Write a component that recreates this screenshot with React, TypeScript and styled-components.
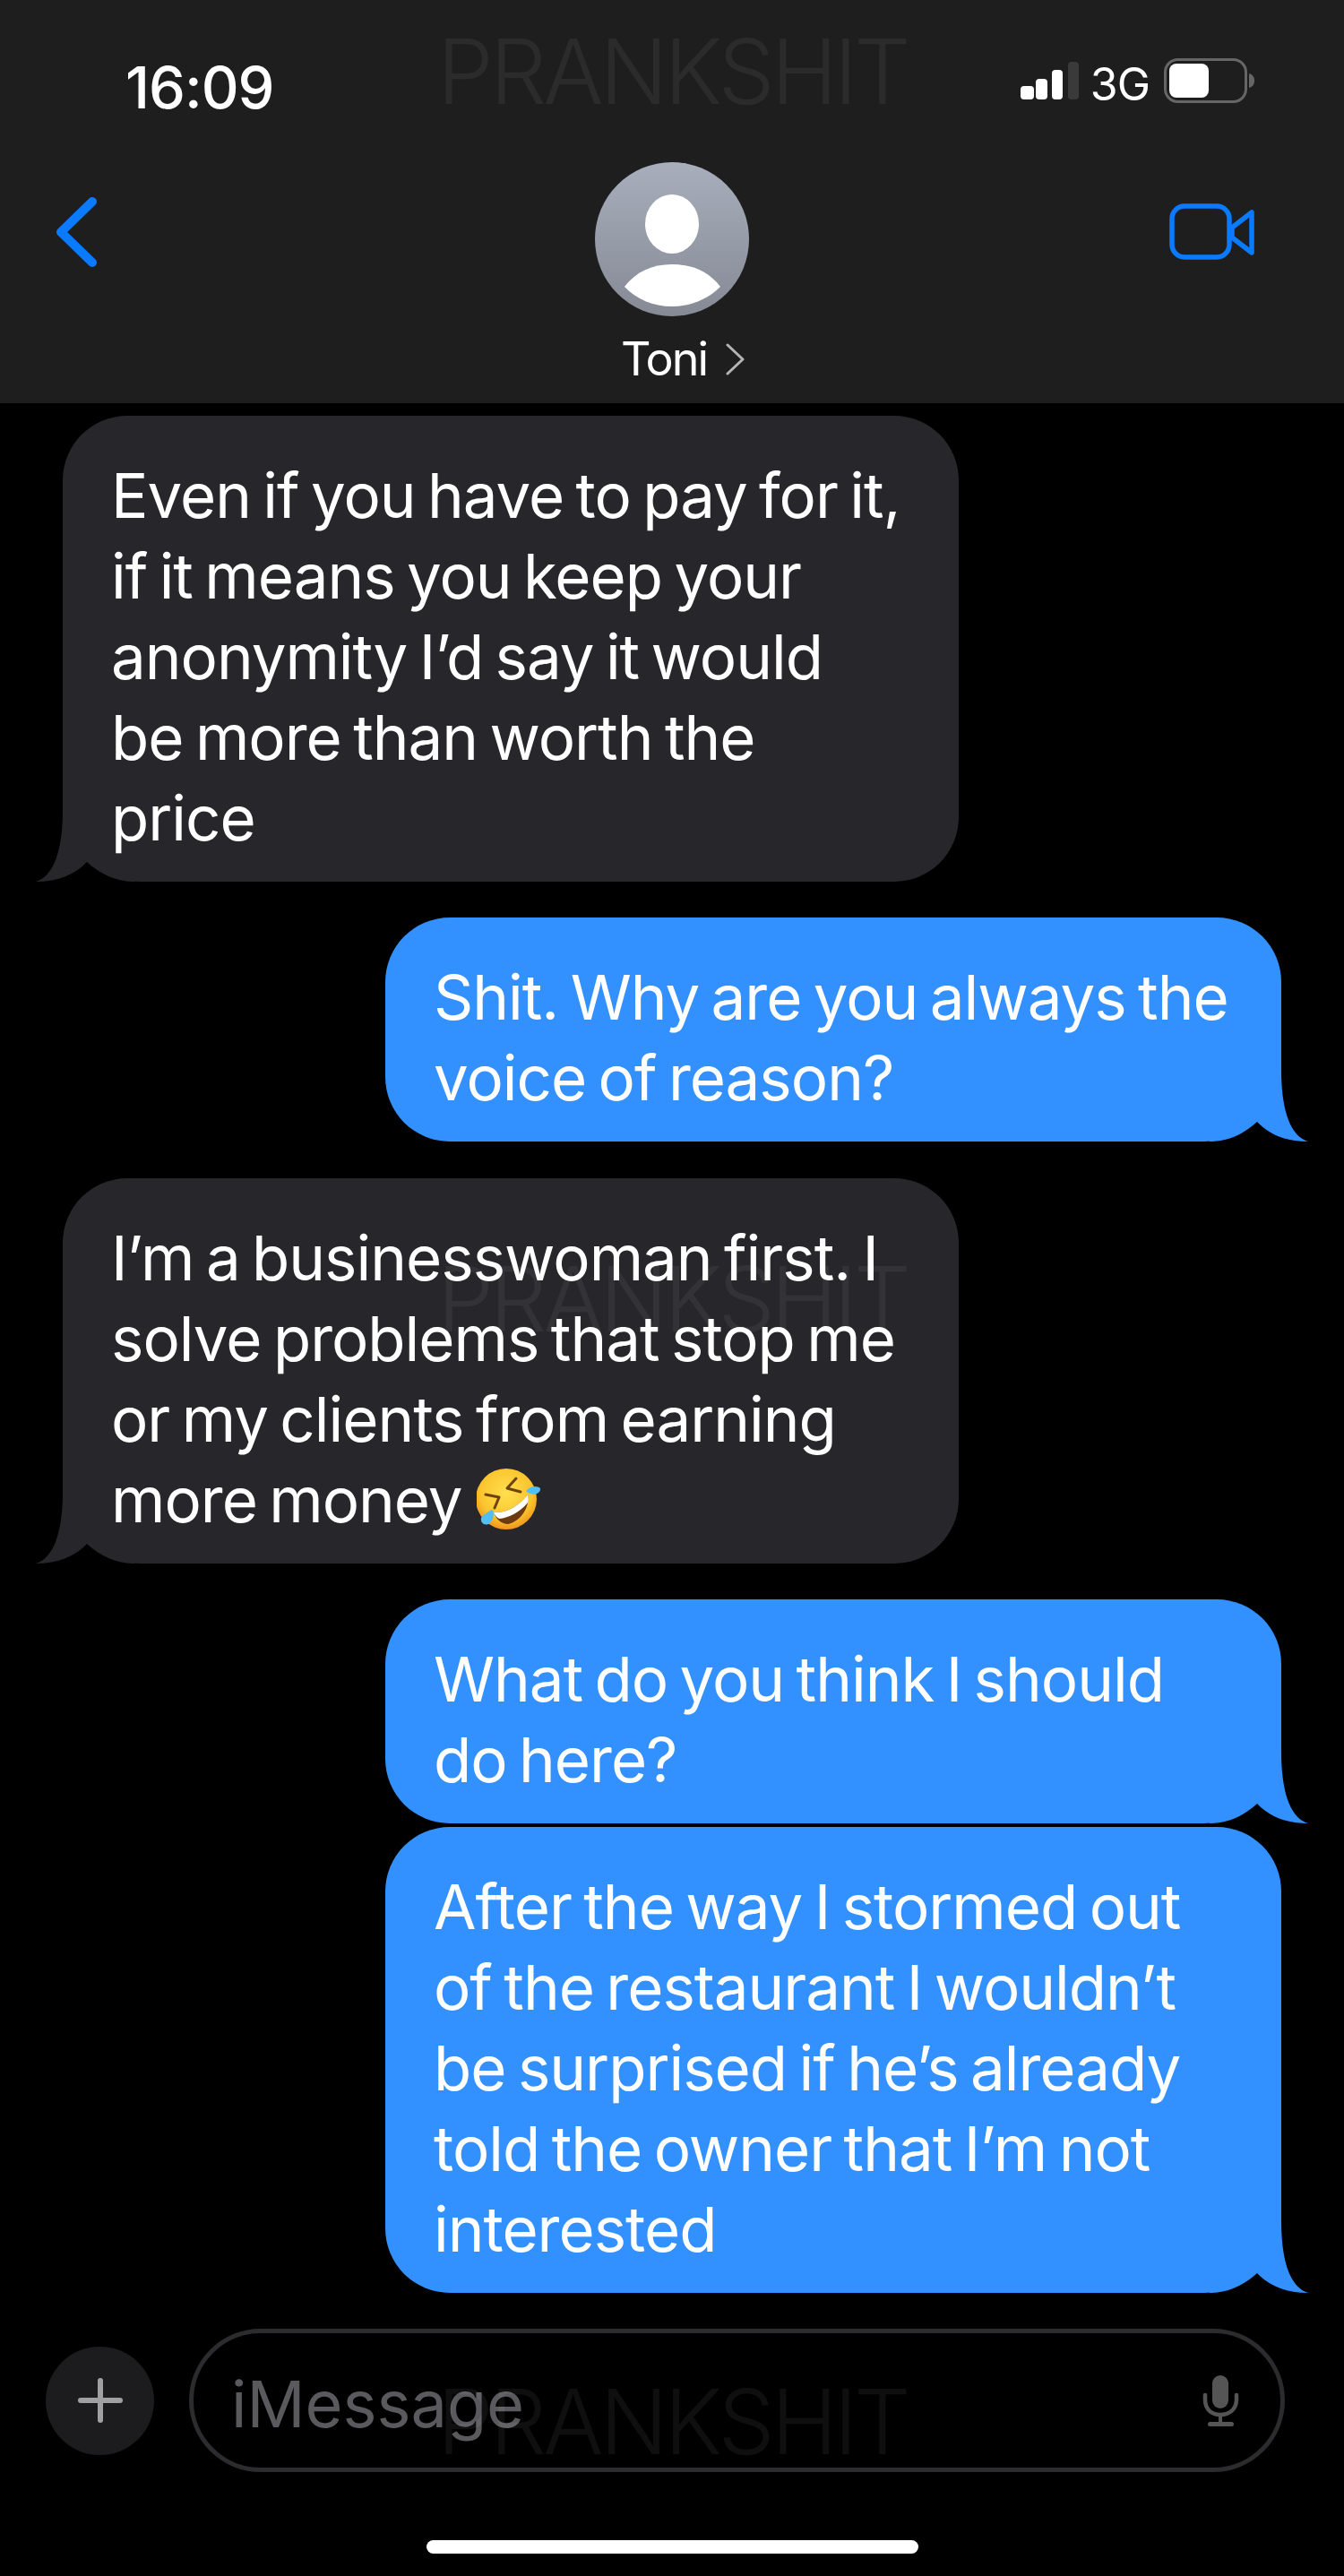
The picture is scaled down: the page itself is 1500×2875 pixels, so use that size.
import React from "react";
import styled, { createGlobalStyle } from "styled-components";

const Global = createGlobalStyle`
  html, body { margin: 0; padding: 0; background: #000; }
  * { box-sizing: border-box; }
`;

const Screen = styled.div`
  position: relative;
  width: 1500px;
  height: 2875px;
  background: #000;
  overflow: hidden;
  display: flex;
  flex-direction: column;
  font-family: Inter, "Liberation Sans", sans-serif;
  color: #fff;
`;

const Header = styled.header`
  height: 450px;
  background: #1e1e1e;
  display: flex;
  flex-direction: column;
  flex-shrink: 0;
`;

const StatusBar = styled.div`
  display: flex;
  justify-content: space-between;
  align-items: flex-start;
  padding: 56px 100px 0 140px;
  height: 181px;
`;

const Clock = styled.div`
  font-size: 65px;
  line-height: 80px;
  font-weight: 500;
  letter-spacing: -1px;
  margin-top: 2px;
`;

const StatusIcons = styled.div`
  display: flex;
  align-items: center;
`;

const SignalIcon = styled.svg`
  width: 66px;
  height: 44px;
  display: block;
`;

const BatteryIcon = styled.svg`
  width: 101px;
  height: 50px;
  display: block;
`;

const NetworkLabel = styled.span`
  font-size: 50px;
  line-height: 60px;
  font-weight: 400;
  letter-spacing: -1px;
  padding-top: 8px;
  margin: 0 16px 0 12px;
`;

const NavBar = styled.div`
  display: grid;
  grid-template-columns: 1fr 300px 1fr;
  align-items: start;
`;

const BackIcon = styled.svg`
  width: 50px;
  height: 80px;
  margin: 38px 0 0 58px;
  display: block;
`;

const Contact = styled.div`
  display: flex;
  flex-direction: column;
  align-items: center;
`;

const Avatar = styled.svg`
  width: 172px;
  height: 172px;
  display: block;
`;

const ContactName = styled.div`
  display: flex;
  align-items: center;
  margin-top: 16px;
  margin-left: 26px;
  font-size: 52px;
  line-height: 64px;
  letter-spacing: -2px;
`;

const Disclosure = styled.svg`
  width: 24px;
  height: 36px;
  margin-left: 20px;
  display: block;
`;

const VideoIcon = styled.svg`
  width: 96px;
  height: 66px;
  margin: 45px 100px 0 0;
  justify-self: end;
  display: block;
`;

const Thread = styled.main`
  display: flex;
  flex-direction: column;
  padding: 14px 70px 0;
  flex: 1;
`;

const Bubble = styled.div<{ $sent?: boolean; $gap: number }>`
  position: relative;
  width: 1000px;
  margin-top: ${(p) => p.$gap}px;
  align-self: ${(p) => (p.$sent ? "flex-end" : "flex-start")};
  padding: 44px 30px 26px 54px;
  border-radius: 72px;
  ${(p) =>
    p.$sent ? "border-bottom-right-radius: 86px;" : "border-bottom-left-radius: 86px;"}
  background: ${(p) => (p.$sent ? "#3390ff" : "#26262b")};
  font-size: 69px;
  line-height: 90px;
  letter-spacing: -1px;
  word-spacing: -5px;
`;

const Line = styled.span`
  position: relative;
  display: block;
  white-space: nowrap;
`;

const Tail = styled.svg<{ $sent?: boolean }>`
  position: absolute;
  bottom: 0;
  width: 110px;
  height: 90px;
  display: block;
  fill: ${(p) => (p.$sent ? "#3390ff" : "#26262b")};
  ${(p) => (p.$sent ? "right: -30px;" : "left: -30px; transform: scaleX(-1);")}
`;

const Emoji = styled.svg`
  display: inline-block;
  width: 74px;
  height: 74px;
  margin-left: 16px;
  vertical-align: -11px;
`;

const Composer = styled.div`
  display: flex;
  align-items: center;
  height: 160px;
  margin-top: 39px;
  padding: 0 66px 0 51px;
  gap: 39px;
  flex-shrink: 0;
`;

const PlusButton = styled.div`
  width: 121px;
  height: 121px;
  border-radius: 50%;
  background: #1c1c1e;
  display: flex;
  align-items: center;
  justify-content: center;
  flex-shrink: 0;
`;

const PlusIcon = styled.svg`
  width: 50px;
  height: 50px;
  display: block;
`;

const InputPill = styled.div`
  flex: 1;
  height: 160px;
  border: 5px solid #2c2c2e;
  border-radius: 80px;
  display: flex;
  align-items: center;
  justify-content: space-between;
  padding: 0 44px 0 42px;
`;

const Placeholder = styled.span`
  font-size: 72px;
  margin-top: 6px;
  color: #5a5a5e;
`;

const MicIcon = styled.svg`
  width: 44px;
  height: 62px;
  margin-top: 2px;
  display: block;
`;

const HomeRow = styled.div`
  display: flex;
  justify-content: center;
  height: 116px;
  padding-top: 76px;
  flex-shrink: 0;
`;

const HomeBar = styled.div`
  width: 549px;
  height: 15px;
  border-radius: 8px;
  background: #fff;
`;

const Watermark = styled.div<{ $top: number }>`
  position: absolute;
  left: 488px;
  top: ${(p) => p.$top}px;
  font-size: 100px;
  line-height: 100px;
  font-weight: 300;
  letter-spacing: -4px;
  color: rgba(255, 255, 255, 0.06);
  pointer-events: none;
`;

const messages: { sent?: boolean; gap: number; lines: string[]; emoji?: boolean }[] = [
  {
    gap: 0,
    lines: [
      "Even if you have to pay for it,",
      "if it means you keep your",
      "anonymity I’d say it would",
      "be more than worth the",
      "price",
    ],
  },
  { sent: true, gap: 40, lines: ["Shit. Why are you always the", "voice of reason?"] },
  {
    gap: 41,
    lines: [
      "I’m a businesswoman first. I",
      "solve problems that stop me",
      "or my clients from earning",
      "more money",
    ],
    emoji: true,
  },
  { sent: true, gap: 40, lines: ["What do you think I should", "do here?"] },
  {
    sent: true,
    gap: 4,
    lines: [
      "After the way I stormed out",
      "of the restaurant I wouldn’t",
      "be surprised if he’s already",
      "told the owner that I’m not",
      "interested",
    ],
  },
];

const RoflEmoji = () => (
  <Emoji viewBox="0 0 74 74">
    <defs>
      <radialGradient id="face" cx="50%" cy="40%" r="60%">
        <stop offset="0%" stopColor="#ffdf4f" />
        <stop offset="70%" stopColor="#fbc52e" />
        <stop offset="100%" stopColor="#f0951d" />
      </radialGradient>
    </defs>
    <circle cx="33" cy="37" r="34" fill="url(#face)" />
    <path d="M19 52 C33 53 47 45 57 32 C60 44 50 62 35 65 C28 65 22 60 19 52 Z" fill="#6b3a10" />
    <path d="M19 52 C33 53 47 45 57 32 C58 36 58 39 57 41 C48 52 36 58 25 59 C22 57 20 55 19 52 Z" fill="#fff" />
    <path d="M10 32 L25 35 L20 47" fill="none" stroke="#6e4310" strokeWidth="3" strokeLinecap="round" strokeLinejoin="round" />
    <path d="M44 14 L34 25 L49 29" fill="none" stroke="#6e4310" strokeWidth="3" strokeLinecap="round" strokeLinejoin="round" />
    <path d="M55 28 C60 22 68 22 71 25 C72 31 62 35 55 28 Z" fill="#54bdf2" />
    <path d="M18 49 C20 55 18 62 13 65 C8 67 4 63 5 58 C7 55 12 51 18 49 Z" fill="#54bdf2" />
  </Emoji>
);

export default function App() {
  return (
    <Screen>
      <Global />
      <Header>
        <StatusBar>
          <Clock>16:09</Clock>
          <StatusIcons>
            <SignalIcon viewBox="0 0 66 44">
              <rect x="0" y="28" width="15" height="15" rx="4" fill="#fff" />
              <rect x="17" y="20" width="13" height="23" rx="4" fill="#fff" />
              <rect x="35" y="10" width="12" height="33" rx="4" fill="#fff" />
              <rect x="53" y="1" width="12" height="42" rx="4" fill="#3a3a3a" />
            </SignalIcon>
            <NetworkLabel>3G</NetworkLabel>
            <BatteryIcon viewBox="0 0 101 50">
              <rect x="1.5" y="1.5" width="90" height="47" rx="14" fill="none" stroke="#666" strokeWidth="3" />
              <rect x="6" y="6" width="44" height="38" rx="8" fill="#fff" />
              <path d="M95 17 C99 18 101 21 101 25 C101 29 99 32 95 33 Z" fill="#666" />
            </BatteryIcon>
          </StatusIcons>
        </StatusBar>
        <NavBar>
          <BackIcon viewBox="0 0 50 80">
            <path d="M45 6 L10 40 L45 74" fill="none" stroke="#0a7aff" strokeWidth="10" strokeLinecap="round" strokeLinejoin="round" />
          </BackIcon>
          <Contact>
            <Avatar viewBox="0 0 172 172">
              <defs>
                <linearGradient id="avatar" x1="0" y1="0" x2="0" y2="1">
                  <stop offset="0%" stopColor="#a8aebb" />
                  <stop offset="100%" stopColor="#858a95" />
                </linearGradient>
              </defs>
              <circle cx="86" cy="86" r="86" fill="url(#avatar)" />
              <ellipse cx="86" cy="69" rx="30" ry="33" fill="#fff" />
              <path d="M33 139 C46 122 64 114 86 114 C108 114 127 122 140 139 C126 153 107 161 86 161 C65 161 46 153 33 139 Z" fill="#fff" />
            </Avatar>
            <ContactName>
              Toni
              <Disclosure viewBox="0 0 24 36">
                <path d="M3 2 L20 18 L3 34" fill="none" stroke="#b5b5b5" strokeWidth="3" strokeLinecap="round" strokeLinejoin="round" />
              </Disclosure>
            </ContactName>
          </Contact>
          <VideoIcon viewBox="0 0 96 66">
            <rect x="4" y="4" width="64" height="57" rx="14" fill="none" stroke="#0a7aff" strokeWidth="5.5" />
            <path d="M71 28 L93 11 V56 L71 39 Z" fill="none" stroke="#0a7aff" strokeWidth="5.5" strokeLinejoin="round" />
          </VideoIcon>
        </NavBar>
      </Header>
      <Thread>
        {messages.map((m, i) => (
          <Bubble key={i} $sent={m.sent} $gap={m.gap}>
            <Tail $sent={m.sent} viewBox="0 0 110 90">
              <path d="M0 90 C20 90 38 82 53 68 C66 82 85 90 110 90 C90 84 80 55 80 10 L80 0 L0 0 Z" />
            </Tail>
            {m.lines.map((l, j) => (
              <Line key={j}>
                {l}
                {m.emoji && j === m.lines.length - 1 ? <RoflEmoji /> : null}
              </Line>
            ))}
          </Bubble>
        ))}
      </Thread>
      <Composer>
        <PlusButton>
          <PlusIcon viewBox="0 0 50 50">
            <path d="M25 3 V47 M3 25 H47" stroke="#a0a0a0" strokeWidth="6" strokeLinecap="round" />
          </PlusIcon>
        </PlusButton>
        <InputPill>
          <Placeholder>iMessage</Placeholder>
          <MicIcon viewBox="0 0 44 62">
            <rect x="12" y="2" width="18" height="37" rx="9" fill="#555" />
            <path d="M4 24 V29 C4 40 11 46 21 46 C31 46 39 40 39 29 V24" fill="none" stroke="#555" strokeWidth="4.5" strokeLinecap="round" />
            <path d="M21 46 V56" stroke="#555" strokeWidth="4" />
            <rect x="7" y="54" width="29" height="5" rx="2.5" fill="#555" />
          </MicIcon>
        </InputPill>
      </Composer>
      <HomeRow>
        <HomeBar />
      </HomeRow>
      <Watermark $top={30}>PRANKSHIT</Watermark>
      <Watermark $top={1400}>PRANKSHIT</Watermark>
      <Watermark $top={2653}>PRANKSHIT</Watermark>
    </Screen>
  );
}
